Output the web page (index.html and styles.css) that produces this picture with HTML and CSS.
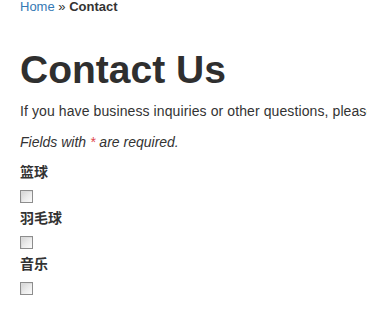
FILE: index.html
```html
<!DOCTYPE html>
<html lang="zh">
<head>
<meta charset="utf-8">
<title>Contact Us</title>
<link rel="stylesheet" href="styles.css">
</head>
<body>
<div class="page">
  <div class="breadcrumbs"><a href="#" class="crumb-link">Home</a> » <span class="crumb-current">Contact</span></div>
  <h1 class="title">Contact Us</h1>
  <p class="intro">If you have business inquiries or other questions, please fill out the following form to contact us. Thank you.</p>
  <p class="note">Fields with <span class="required">*</span> are required.</p>
  <form class="form">
    <div class="field">
      <label class="field-label" for="f1">篮球</label>
      <input class="check" type="checkbox" id="f1">
    </div>
    <div class="field">
      <label class="field-label" for="f2">羽毛球</label>
      <input class="check" type="checkbox" id="f2">
    </div>
    <div class="field">
      <label class="field-label" for="f3">音乐</label>
      <input class="check" type="checkbox" id="f3">
    </div>
  </form>
</div>
</body>
</html>
```

FILE: styles.css
```css
html, body {
  margin: 0;
  padding: 0;
  overflow: hidden;
  background: #ffffff;
}

body {
  font-family: "Liberation Sans", Arial, "Noto Sans CJK SC", sans-serif;
  color: #333333;
}

.page {
  padding: 0 0 0 20px;
}

.breadcrumbs {
  font-size: 13px;
  line-height: 13px;
  white-space: nowrap;
}

.crumb-link {
  color: #3579b4;
  text-decoration: none;
}

.crumb-current {
  font-weight: bold;
}

.title {
  margin: 35px 0 9px;
  font-size: 39px;
  line-height: 44px;
  font-weight: bold;
  color: #2f2f2f;
}

.intro,
.note {
  margin: 0 0 10px;
  font-size: 14px;
  line-height: 21px;
  white-space: nowrap;
}

.intro {
  letter-spacing: 0.1px;
}

.note {
  font-style: italic;
  margin-bottom: 8px;
}

.required {
  color: #e0484d;
}

.form {
  margin: 0;
}

.field {
  margin: 0 0 4px;
}

.field-label {
  display: block;
  font-family: "Noto Sans CJK SC", sans-serif;
  font-size: 14px;
  line-height: 20px;
  font-weight: bold;
  color: #333333;
}

.check {
  display: block;
  -webkit-appearance: none;
  appearance: none;
  width: 13px;
  height: 13px;
  margin: 9px 0 0;
  border: 1px solid #8d8d8d;
  background: linear-gradient(135deg, #d2d2d2 0%, #ececec 55%, #fbfbfb 100%);
  box-shadow: inset 1px 1px 0 #dcdcdc;
  box-sizing: border-box;
}
```
